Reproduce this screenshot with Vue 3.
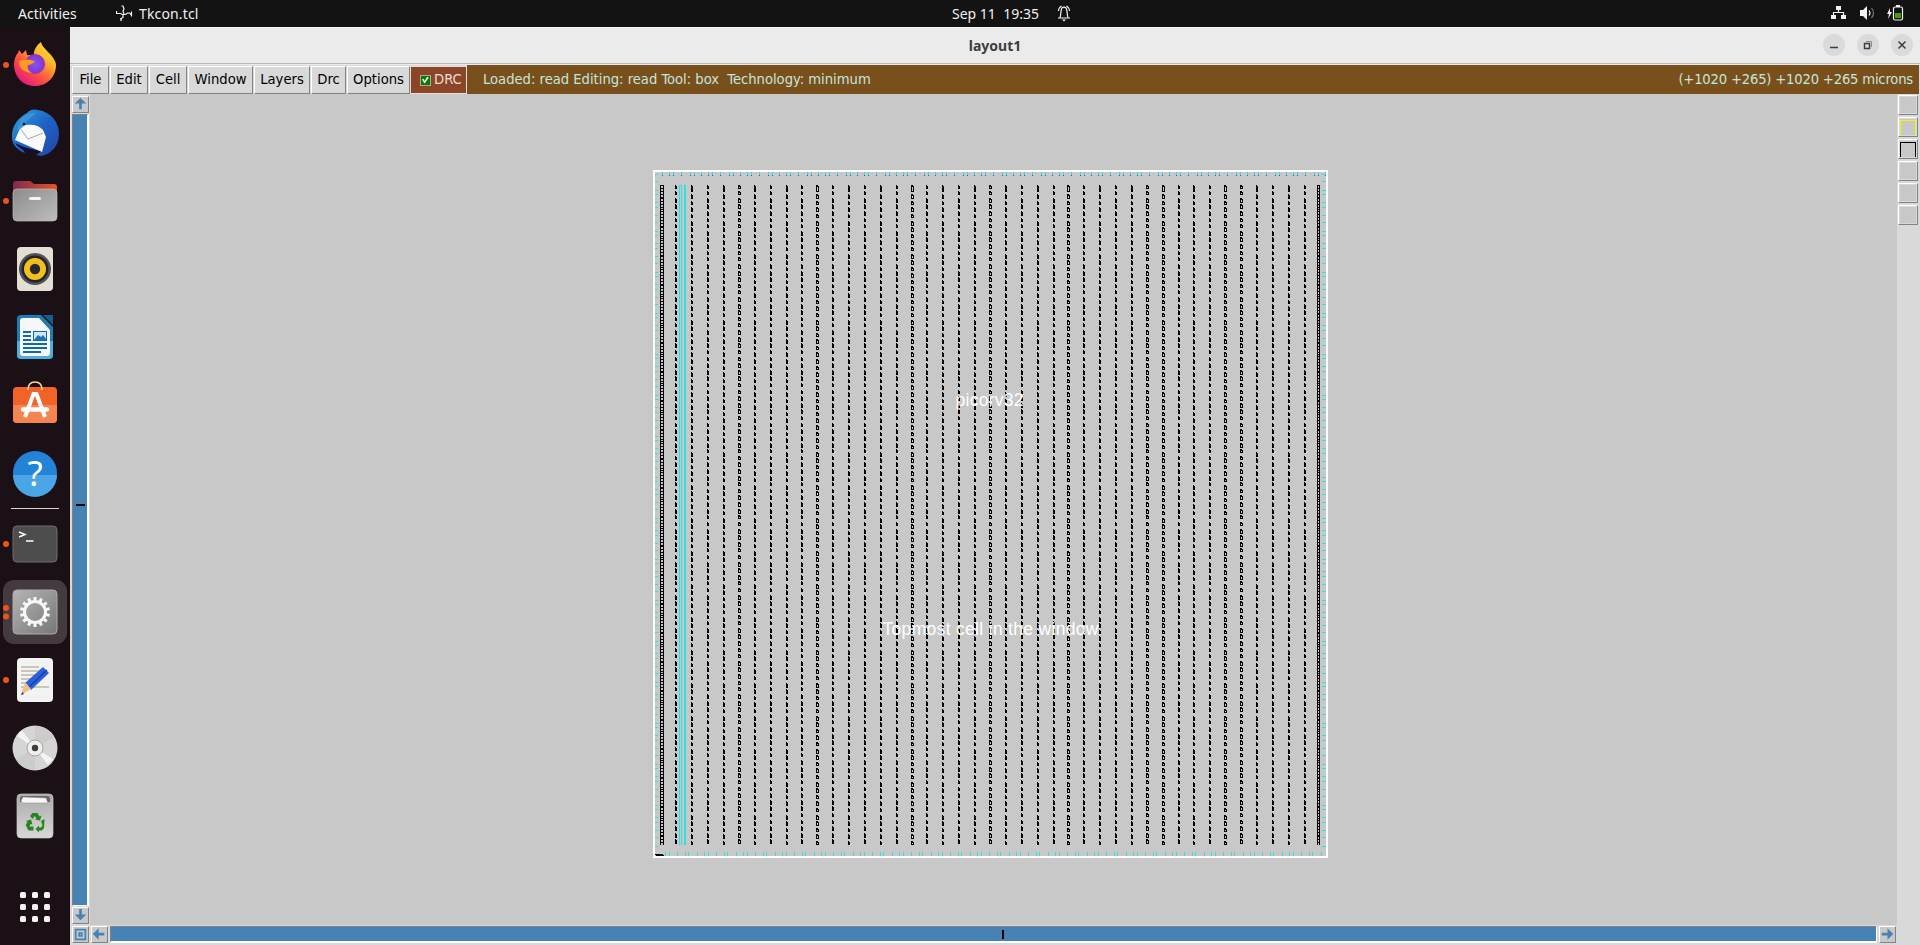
<script setup>
const menus = [
  { t: 'File', w: 37 }, { t: 'Edit', w: 38 }, { t: 'Cell', w: 38 }, { t: 'Window', w: 65 },
  { t: 'Layers', w: 56 }, { t: 'Drc', w: 35 }, { t: 'Options', w: 63 },
]
const swatches = ['', 'yellow', 'black', '', '', '']

const columnX = [675, 691, 707, 723, 738, 754, 770, 786, 801, 816, 832, 848, 864, 880, 896, 911, 926, 942, 958, 974, 989, 1005, 1021, 1037, 1053, 1067, 1083, 1099, 1115, 1131, 1146, 1162, 1178, 1193, 1209, 1224, 1240, 1256, 1272, 1288, 1304]
const openX = new Set([738, 816, 911, 989, 1067, 1146, 1162, 1224, 1240])

// Alternate columns hold mirrored cell rows, so their segments are offset.
const evenRows = []
for (let k = 0; k < 100; k++) evenRows.push([185 + Math.floor(6.616 * k), k % 5 < 2 ? 4 : 5])
const oddRows = [[185, 7]]
for (let k = 0; 9.6 + 6.6 * k < 650; k++) oddRows.push([185 + Math.floor(9.6 + 6.6 * k), k % 5 === 1 || k % 5 === 3 ? 4 : 5])
oddRows[oddRows.length - 1][1] = 5
oddRows.push([841, 4])

const rowsFor = (i) => (i % 2 ? oddRows : evenRows)
const plainPath = columnX.map((x, i) => openX.has(x) ? '' : rowsFor(i).map(([y, h]) => `M${x} ${y}h1v1h1v${h - 1}h-2z`).join('')).join('')
const openPath = columnX.map((x, i) => openX.has(x) ? rowsFor(i).map(([y, h]) => `M${x + 0.5} ${y + 0.5}h1v1h1v${h - 2}h-2z`).join('') : '').join('')

const ladder = (x, w) => {
  let d = `M${x} 185h1v660h-1zM${x + w - 1} 185h1v660h-1z`
  const steps = [3, 3, 3, 3, 1, 3, 3, 3, 2, 2, 3]
  for (let y = 185, k = 0; y < 845; y += steps[k++ % steps.length]) d += `M${x} ${y}h${w}v1h-${w}z`
  return d
}
const series = (start, end, period, offs) => {
  const out = []
  for (let b = start; b < end; b += period) for (const o of offs) if (b + o < end) out.push(b + o)
  return out
}
const topX = series(662, 1326, 39, [0, 7, 11, 19, 28, 32])
const botX = series(665, 1326, 39, [0, 4, 12, 20, 23, 32])
const sideY = series(174, 850, 41, [0, 7, 16, 20, 28, 33])
const topTicks = topX.map((x) => `M${x} 172h1v3h-1z`).join('')
const topDots = topX.map((x) => `M${x} 175h1v1h-1z`).join('')
const botTicks = botX.map((x) => `M${x} 852h1v4h-1z`).join('')
const leftTicks = sideY.map((y) => `M655 ${y}h3v1h-3z`).join('')
const rightTicks = sideY.map((y) => `M1322 ${y}h4v1h-4z`).join('')
const teeth = Array.from({ length: 14 }, (_, i) => (i * 360) / 14)
const dots = [23, 35, 47]
</script>

<template>
  <div class="desktop">
    <header class="topbar">
      <span class="act">Activities</span>
      <svg class="tk" width="17" height="17" viewBox="0 0 17 17"><path d="M0.500 6v2.500h4l2 1h3l2-1.500h2l2 2M15.500 6.500v5M7 9.500v3l-2 1v2.500M8 9l-1-3l1-2l-1-3h-1.500M4 14h2" /></svg>
      <span class="appname">Tkcon.tcl</span>
      <span class="clock">Sep 11&nbsp; 19:35</span>
      <svg class="bell" width="14" height="17" viewBox="0 0 14 17"><path d="M1 13h12M3 12.500c1-2 .6-8 2-9.500c1-1.300 3-1.300 4 0c1.400 1.500 1 7.500 2 9.500M1.500 6q0-3 3-5M12.500 6q0-3-3-5" /><path d="M5 14.500h4l-2 2z" class="f" /></svg>
      <svg class="tray" width="76" height="17" viewBox="0 0 76 17">
        <path class="f" d="M5 1h5v4h-5zM0 10h5v4h-5zM10 10h5v4h-5z" /><path d="M7.500 4v4M2.500 11v-3.500h10v3.500" />
        <path class="f" d="M29 5h3l4-4v14l-4-4h-3z" /><path d="M38 5.500q2 2.500 0 5" /><path class="dim" d="M40.500 3q4 5 0 10" />
        <path class="f" d="M59 3l-3 6h2l-1 5l4-7h-2z" /><rect x="62.500" y="2" width="9" height="13" rx="1.500" /><path class="f" d="M65 0h4v2h-4z" /><path class="green" d="M64 8h6v5h-6z" />
      </svg>
    </header>

    <div class="main">
      <aside class="dock">
        <svg width="70" height="918" viewBox="0 27 70 918">
          <defs>
            <linearGradient id="ff" x1="1" y1="0" x2="0.200" y2="1"><stop offset="0" stop-color="#fff04a" /><stop offset=".35" stop-color="#ffb52a" /><stop offset=".65" stop-color="#ff553d" /><stop offset="1" stop-color="#e4108a" /></linearGradient>
            <radialGradient id="fp"><stop offset="0" stop-color="#7a5cf5" /><stop offset="1" stop-color="#8c2fc9" /></radialGradient>
            <linearGradient id="tb" x1="0" y1="0" x2="1" y2="1"><stop offset="0" stop-color="#2fa4e0" /><stop offset=".5" stop-color="#1d63c4" /><stop offset="1" stop-color="#2344a8" /></linearGradient>
            <linearGradient id="fo"><stop offset="0" stop-color="#7d2c50" /><stop offset="1" stop-color="#e95420" /></linearGradient>
            <linearGradient id="gr" x1="0" y1="0" x2="1" y2="1"><stop offset="0" stop-color="#8c8c8c" /><stop offset="1" stop-color="#bdbdbd" /></linearGradient>
            <linearGradient id="gs" x1="0" y1="0" x2="1" y2="1"><stop offset="0" stop-color="#b5b5b5" /><stop offset="1" stop-color="#777" /></linearGradient>
            <linearGradient id="tr" x1="0" y1="0" x2="0" y2="1"><stop offset="0" stop-color="#aaa" /><stop offset="1" stop-color="#d8d8d8" /></linearGradient>
          </defs>
          <g class="run"><circle cx="6" cy="65" r="3" /><circle cx="6" cy="201" r="3" /><circle cx="6" cy="544" r="3" /><circle cx="6" cy="680" r="3" /></g>

          <path fill="url(#ff)" d="M14 64c0-5 2-9 4-11l1-3l3 4l4-4l1 5q4 0 7 1c-1-6 3-11 7-14c1 5 5 7 7 10l3 3c3 4 5 7 5 10c0 12-9 21-21 21s-21-9-21-22z" />
          <circle cx="35" cy="64" r="10" fill="url(#fp)" />
          <path fill="#ff9a1f" d="M19 61q6-3 16 0q-3 4-7 4q-2 4 4 8q-13-1-13-12z" />
          <path fill="#ffc52e" d="M37 54q10 2 11 12q3-4 1-9q-4-7-12-8z" opacity=".7" />

          <path fill="url(#tb)" d="M12 138c-1-12 7-21 15-25q4-5 11-3c13 2 21 12 21 24c0 11-7 20-18 22l-5-1l6-4l-20-3l3 5c-9-3-13-10-13-15z" />
          <path fill="#fafafa" d="M15 140l6-14q15-4 22 4l3 7l-4 15z" />
          <path fill="none" stroke="#aaa" d="M20 128l8 11l15-6" />
          <path fill="#3a95d8" d="M17 130q4-18 19-17l-9 8q-3 7-10 9z" /><circle cx="24" cy="124" r="1.500" fill="#123" />
          <path fill="#190b38" d="M15 143l9 4l14 4l-9 1q-9-2-14-9z" />

          <path fill="url(#fo)" d="M13 184q0-3 3-3h14l4 3h20q3 0 3 3v14h-44z" />
          <rect x="13" y="189" width="44" height="32" rx="4" fill="url(#gr)" stroke="#bcbcbc" stroke-width=".7" /><rect x="29" y="197" width="12" height="3" rx="1.500" fill="#f5f5f5" />

          <rect x="17" y="247" width="36" height="44" rx="4" fill="#e3dfd5" /><circle cx="35" cy="269" r="16" fill="#505257" /><circle cx="35" cy="269" r="13.500" fill="#22242a" /><circle cx="35" cy="269" r="11" fill="#f3bf20" /><circle cx="35" cy="269" r="5.200" fill="#292a2e" />

          <path fill="#1b7db1" d="M21 315h20l12 12v28q0 4-4 4h-28q-4 0-4-4v-36q0-4 4-4z" /><path fill="#4bafe0" d="M17 341h36v14q0 4-4 4h-28q-4 0-4-4z" />
          <path fill="#f7f7f7" d="M23 318h16l11 12v23q0 3-3 3h-24q-3 0-3-3v-32q0-3 3-3z" /><path fill="#155e8d" d="M43 315h10v10z" />
          <path stroke="#0d6aa8" stroke-width="1.800" d="M23 332h8M23 336h8M23 340h8M23 344h24M23 348h24M23 352h18" /><rect x="33.500" y="331.500" width="13" height="9" fill="#cde6f8" stroke="#0d6aa8" /><path fill="#1876b1" d="M34 340l4-5l3 2l2-2l4 5z" />

          <rect x="13" y="387" width="44" height="36" rx="4" fill="#f26327" /><path fill="#f48450" d="M13 405h44v14q0 4-4 4h-36q-4 0-4-4z" />
          <path fill="none" stroke="#f5d4a0" stroke-width="1.600" d="M28 390q0-8 7-8t7 8" />
          <path fill="none" stroke="#fff" stroke-width="4" d="M25 417l8.500-23h3l8.500 23" /><path stroke="#fff" stroke-width="4.500" stroke-linecap="round" d="M23 409.500h24" />

          <circle cx="35" cy="473" r="22" fill="#2383d8" /><path fill="#49a5e6" d="M13 475a22 22 0 0 0 44 0z" />
          <text x="35" y="486" class="q">?</text>
          <path stroke="#dad7d7" d="M11 508.500h48" />

          <rect x="13" y="526" width="44" height="36" rx="4" fill="#4d4d4d" stroke="#6c6c6c" /><path fill="none" stroke="#fff" stroke-width="1.500" d="M19 532l6 2.500l-6 2.500M26 541h7.500" />

          <rect x="3" y="580" width="64" height="64" rx="11" fill="#453a40" /><g class="run"><circle cx="6" cy="608" r="3" /><circle cx="6" cy="616.500" r="3" /></g>
          <rect x="13" y="590" width="44" height="44" rx="4" fill="url(#gs)" stroke="#aaa" />
          <rect v-for="a in teeth" :key="a" x="33.500" y="597" width="3" height="5" fill="#f7f7f5" :transform="`rotate(${a} 35 612)`" />
          <circle cx="35" cy="612" r="10.500" fill="none" stroke="#f7f7f5" stroke-width="3" />

          <rect x="17" y="658" width="36" height="44" rx="4" fill="#f3f3f3" /><path stroke="#c9c5b8" stroke-width="1.800" d="M21 667h18M21 671h20M21 675h18M21 679h14M21 683h10M21 687h28" />
          <path fill="#2c5fdb" d="M43 667l6 6l-18 17l-6-7z" /><path stroke="#173fa8" stroke-width="1.500" d="M47 670l-18 17" /><path fill="#efc08c" d="M25 682l6 7l-10 6z" /><path fill="#333" d="M22.500 692l1.500 2l-3 1z" />

          <circle cx="35" cy="748" r="22.500" fill="#d5d5d5" /><path fill="#c7c7c7" d="M35 748v-22a22 22 0 0 1 19 11zM35 748v22a22 22 0 0 1-19-11z" opacity=".6" /><path fill="#f4f4f4" d="M35 748l-18-12l5-6zM35 748l18 11l-5 6z" />
          <circle cx="35" cy="748" r="8" fill="#efefef" stroke="#aaa38e" /><circle cx="35" cy="748" r="3.200" fill="#3c3c3c" />

          <rect x="17" y="794" width="36" height="44" rx="4" fill="url(#tr)" stroke="#c8c8c8" stroke-width=".7" /><path fill="#666" d="M20 802v-3q0-3 3-3h24q3 0 3 3v3z" /><path fill="#f7f7f7" stroke="#999" stroke-width=".6" d="M21 801l2-4l23 1l2 5h-25z" />
          <g fill="#26851d">
            <path d="M30 816l2.500-3h5l2 3.500l2-1l-1.500 5l-5-1l1.500-1l-1.800-2.500l-2 3z" />
            <path d="M41 821l3.500-2l-.5 9l-2 2.500h-3v2l-3.500-3.500l3.500-3.500v2h2l1.500-2z" />
            <path d="M26 821l5-1.500l1.500 5l-2-.6l-1 2.600h4v4h-5l-2.800-5.500l1.800-3z" />
          </g>

          <g fill="#f5f2f0"><template v-for="y in [895, 907, 919]" :key="y"><rect v-for="x in dots" :key="x" :x="x - 3" :y="y - 3" width="6" height="6" rx="1.500" /></template></g>
        </svg>
      </aside>

      <section class="window">
        <div class="titlebar">
          <span class="title">layout1</span>
          <div class="winbtns">
            <svg viewBox="0 0 22 22"><path d="M7 13.500h8" /></svg>
            <svg viewBox="0 0 22 22"><path d="M7.500 9.500h5v5h-5z" /><path class="back" d="M9 7.500h5.500v5.500" /></svg>
            <svg viewBox="0 0 22 22"><path d="M7.500 7.500l7 7M14.500 7.500l-7 7" /></svg>
          </div>
        </div>
        <div class="menubar">
          <span v-for="m in menus" :key="m.t" class="menu" :style="{ width: m.w + 'px' }">{{ m.t }}</span>
          <span class="drc"><svg width="11" height="11" viewBox="0 0 11 11"><path d="M2 4l2.500 3.500l4-6" /></svg><b>DRC</b></span>
          <div class="status"><span>Loaded: read Editing: read Tool: box&nbsp; Technology: minimum</span><span class="coords">(+1020 +265) +1020 +265 microns</span></div>
        </div>
        <div class="body">
          <div class="vscroll">
            <svg class="btn" viewBox="0 0 17 17"><path d="M8.500 1l6.500 6.500h-5v6.500h-3v-6.500h-5z" /></svg>
            <div class="vtrack"><i></i></div>
            <svg class="btn" viewBox="0 0 17 17"><path d="M8.500 14l6.500-6.500h-5v-6.500h-3v6.500h-5z" /></svg>
          </div>
          <svg class="canvas" width="1807" height="831" viewBox="90 94 1807 831" shape-rendering="crispEdges">
            <rect x="654" y="171" width="673" height="686" fill="none" stroke="#fff" stroke-width="2" />
            <path :d="topTicks + botTicks + leftTicks + rightTicks" fill="#2de2e2" />
            <path :d="topDots" fill="#2767c4" />
            <path d="M679 185h3v1h-3zM679 185h1v660h-1zM681 185h1v660h-1zM684 185h2v660h-2z" fill="#2de2e2" />
            <path :d="plainPath + ladder(660, 4) + ladder(1317, 3)" />
            <path :d="openPath" fill="none" stroke="#000" />
            <path d="M655 854h8v1h1v1h-8z" />
            <text x="955.500" y="406" textLength="68" class="lab">picorv32</text>
            <text x="882.500" y="635" textLength="216" class="lab">Topmost cell in the window</text>
          </svg>
          <div class="layers"><i v-for="(s, i) in swatches" :key="i" :class="s"></i></div>
        </div>
        <div class="hscroll">
          <svg class="btn" viewBox="0 0 17 17"><path d="M2 2h13v13h-13zM4 4v9h9v-9zM6 6h5v5h-5zM8 8v1h1v-1z" fill-rule="evenodd" /></svg>
          <svg class="btn" viewBox="0 0 17 17"><path d="M1 8l6.500-6.500v5h6.500v3h-6.500v5z" /></svg>
          <div class="htrack"><i></i></div>
          <svg class="btn" viewBox="0 0 17 17"><path d="M15 8l-6.500-6.500v5h-6.500v3h6.500v5z" /></svg>
        </div>
      </section>
    </div>
  </div>
</template>

<style>
body { margin: 0; overflow: hidden; }
</style>
<style scoped>
* { box-sizing: border-box; }
.desktop { width: 1920px; height: 945px; display: flex; flex-direction: column; font-family: "Noto Sans", sans-serif; }
.topbar { height: 27px; background: #131313; color: #f0f0f0; display: flex; align-items: center; font-size: 14px; white-space: pre; flex: none; }
.topbar span { line-height: 27px; }
.topbar svg { fill: none; stroke: #f2f2f2; stroke-width: 1.200; flex: none; }
.topbar .f { fill: #f2f2f2; stroke: none; }
.topbar .dim { stroke: #777; }
.topbar .green { fill: #4e9a06; stroke: none; }
.act { margin-left: 18px; width: 98px; letter-spacing: 0.050px; }
.tk { margin-right: 6px; }
.appname { width: 813px; letter-spacing: 0.150px; }
.clock { width: 105px; }
.bell { margin-right: 760px; }
.main { flex: 1; display: flex; min-height: 0; }
.dock { width: 70px; background: #1b1015; }
.dock svg { display: block; }
.run { fill: #e95420; }
.q { font: 35px "Noto Sans", sans-serif; fill: #fff; text-anchor: middle; }
.window { width: 1850px; display: flex; flex-direction: column; background: #d9d9d9; }
.titlebar { height: 38px; background: #ebebeb; border-top: 1px solid #f8f8f8; border-bottom: 1px solid #ebebeb; box-shadow: inset 0 -1px #b9b9b9; position: relative; display: flex; justify-content: center; flex: none; }
.title { font-size: 14px; font-weight: 700; color: #3d3d3d; line-height: 35px; }
.winbtns { position: absolute; right: 7px; top: 6px; display: flex; gap: 12px; }
.winbtns svg { width: 22px; height: 22px; border-radius: 50%; background: #dadada; fill: none; stroke: #3d3d3d; stroke-width: 1.500; }
.winbtns .back { stroke: #8a8a8a; stroke-width: 1; }
.menubar { height: 29px; display: flex; padding: 1px 1px 0 2px; flex: none; font-family: "DejaVu Sans Condensed", "DejaVu Sans", sans-serif; font-stretch: condensed; }
.menu { height: 28px; margin-right: 1px; border: 1px solid #fff; border-right-color: #828282; border-bottom-color: #828282; font-size: 14.670px; line-height: 24px; text-align: center; color: #000; white-space: nowrap; }
.drc { width: 56px; height: 28px; background: #8b4528; color: #f0dcd4; border: 1px solid #eadfd8; border-left: 0; font-size: 14.670px; line-height: 24px; display: flex; align-items: center; padding-left: 9px; gap: 4px; flex: none; }
.drc b { font-weight: 400; margin-left: -1px; padding-bottom: 2px; }
.drc svg { background: #008000; border: 1px solid #c4a090; fill: none; stroke: #fff; stroke-width: 2; flex: none; }
.status { flex: 1; background: #79501c; margin-top: -1px; color: #c3e6dc; font-size: 14.670px; line-height: 28px; display: flex; justify-content: space-between; padding: 0 6px 0 16px; white-space: pre; letter-spacing: -0.020px; }
.coords { letter-spacing: -0.200px; }
.body { height: 831px; display: flex; flex: none; }
.vscroll { width: 20px; display: flex; flex-direction: column; padding: 2px 1px 1px 2px; }
.btn { width: 17px; height: 17px; background: #c8c8c8; border: 1px solid #fff; border-right-color: #828282; border-bottom-color: #828282; fill: #4682b4; flex: none; }
.vtrack { flex: 1; background: #4682b4; border: 1px solid #828282; border-right: 2px solid #fff; border-bottom-color: #fff; margin: 1px 0; position: relative; }
.vtrack i { position: absolute; left: 3px; top: 389px; width: 9px; height: 2px; background: #000; }
.canvas { background: #c8c8c8; display: block; }
.lab { font: 17.500px "Liberation Sans", Arial, sans-serif; fill: #fff; }
.layers { width: 23px; padding: 1px 0 0 1px; display: flex; flex-direction: column; gap: 2px; }
.layers i { width: 20px; height: 20px; background: #c8c8c8; border: 1px solid #fff; border-right-color: #828282; border-bottom-color: #828282; box-shadow: inset 0 0 0 1px #d9d9d9; position: relative; }
.layers .yellow::after, .layers .black::after { content: ""; position: absolute; inset: 2px 1px 1px 1px; border: 1px solid #f5f50a; border-bottom: 0; }
.layers .black::after { border-color: #000; }
.hscroll { height: 20px; display: flex; padding: 1px 24px 0 2px; gap: 2px; }
.htrack { flex: 1; height: 17px; background: #4682b4; border: 1px solid #828282; border-right-color: #fff; border-bottom: 2px solid #fff; position: relative; }
.htrack i { position: absolute; left: 891px; top: 3px; width: 2px; height: 9px; background: #000; }
</style>
